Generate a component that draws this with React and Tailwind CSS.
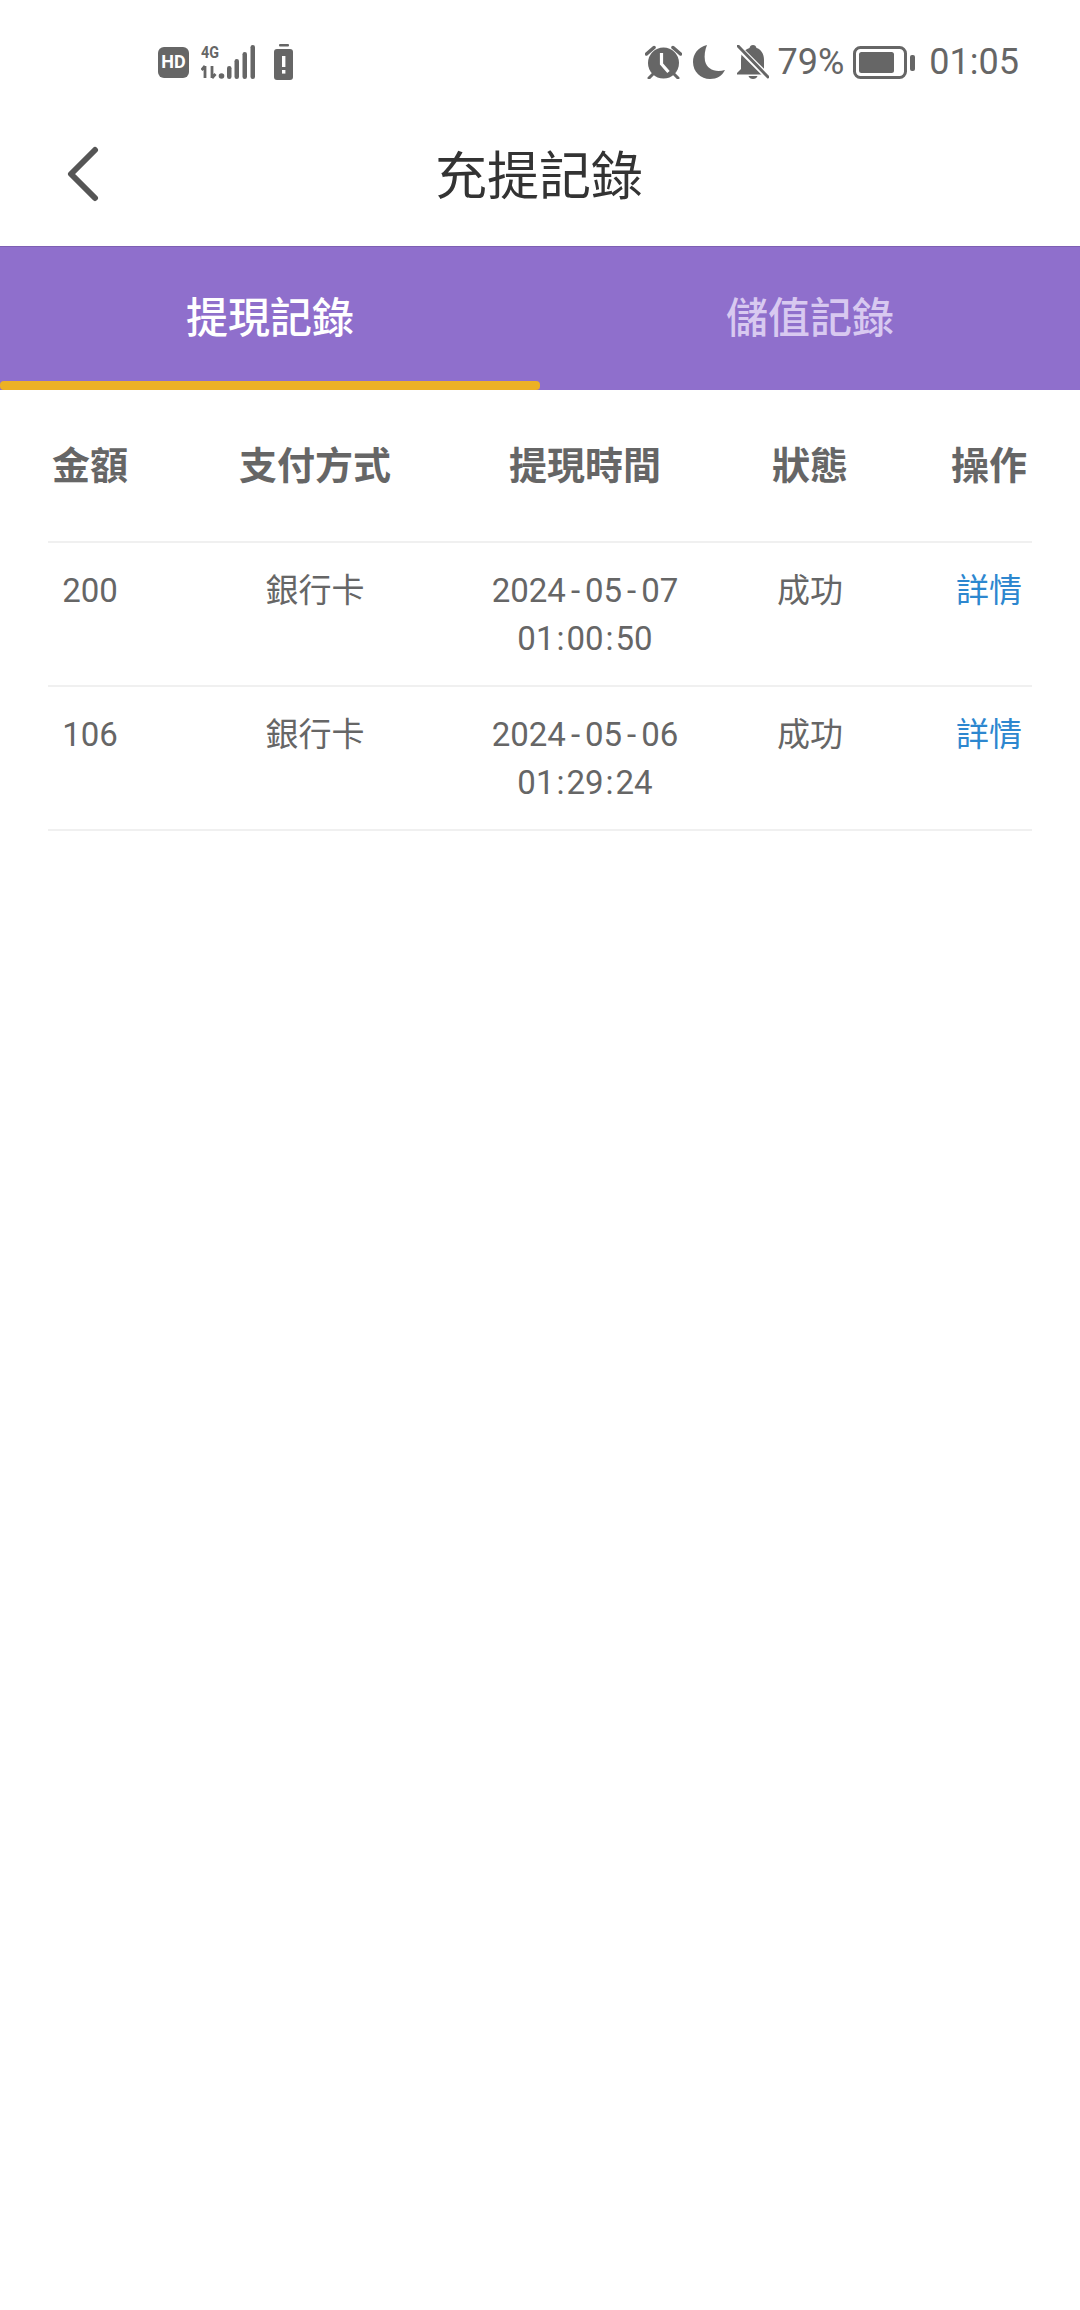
const records = [
  { amount: "200", method: "銀行卡", date: ["2024", "05", "07"], time: ["01", "00", "50"], status: "成功" },
  { amount: "106", method: "銀行卡", date: ["2024", "05", "06"], time: ["01", "29", "24"], status: "成功" },
]

const gridCols = "grid grid-cols-[132px_270px_270px_180px_132px] mx-[48px] border-b-2 border-[#f0f0f0]"

function SignalIcon() {
  return (
    <svg width="54" height="36" viewBox="0 0 54 36" className="block">
      <text x="0" y="14" fontSize="17" fontWeight="700" fill="#666" fontFamily="Roboto, sans-serif" textLength="18" lengthAdjust="spacingAndGlyphs">4G</text>
      <path d="M4 34V22M0.500 26l3.500-4M11 22v12M11 34l3.500-4" stroke="#666" strokeWidth="2.800" fill="none" />
      <circle cx="20.500" cy="32" r="2.800" fill="#666" />
      <rect x="26" y="22" width="4.500" height="13" rx="2.200" fill="#666" />
      <rect x="33.500" y="15" width="4.500" height="20" rx="2.200" fill="#666" />
      <rect x="41.500" y="8" width="4.500" height="27" rx="2.200" fill="#666" />
      <rect x="49.500" y="1" width="4.500" height="34" rx="2.200" fill="#666" />
    </svg>
  )
}

function AlertBatteryIcon() {
  return (
    <svg width="20" height="36" viewBox="0 0 20 36" className="block">
      <rect x="5" y="0" width="10" height="2.500" rx="1" fill="#666" />
      <rect x="0" y="5" width="19" height="31" rx="3" fill="#666" />
      <rect x="8" y="12" width="3.400" height="11" fill="#fff" />
      <rect x="8" y="26" width="3.400" height="3.600" fill="#fff" />
    </svg>
  )
}

function AlarmIcon() {
  return (
    <svg width="37" height="34" viewBox="0 0 37 34" className="block">
      <circle cx="18.500" cy="18" r="15.500" fill="#666" />
      <path d="M1.500 9 9 2.500M35.500 9 28 2.500" stroke="#666" strokeWidth="3.500" strokeLinecap="round" />
      <path d="M8 29l-4 4M29 29l4 4" stroke="#666" strokeWidth="3" strokeLinecap="round" />
      <path d="M16.500 8v11l7 8" stroke="#fff" strokeWidth="3.200" fill="none" />
    </svg>
  )
}

function MoonIcon() {
  return (
    <svg width="32" height="34" viewBox="0 0 32 34" className="block">
      <path d="M14 0C5 2 0 9 0 17c0 10 8 17 17 17 7 0 12-3 15-9-10 3-18-1-20-9-1-6 0-11 2-16Z" fill="#666" />
    </svg>
  )
}

function BellOffIcon() {
  return (
    <svg width="32" height="34" viewBox="0 0 32 34" className="block">
      <path d="M16 0c-2 0-3 1-3.500 3C9 4 7 6 5.500 8L27 29.500V15c0-6-3-11-7.500-12C19 1 18 0 16 0Z" fill="#666" />
      <path d="M4 14v10l-4 4v1.500h25L4.500 9Z" fill="#666" />
      <path d="M11.500 31h9c-.5 2-2.500 3-4.500 3s-4-1-4.500-3Z" fill="#666" />
      <path d="M2 3l29 29" stroke="#fff" strokeWidth="6" />
      <path d="M1 1l30 31" stroke="#666" strokeWidth="3" strokeLinecap="round" />
    </svg>
  )
}

function BatteryIcon() {
  return (
    <svg width="62" height="33" viewBox="0 0 62 33" className="block">
      <rect x="1.500" y="1.500" width="51" height="30" rx="6" fill="none" stroke="#666" strokeWidth="3" />
      <rect x="6" y="6" width="35" height="21" rx="2.500" fill="#666" />
      <rect x="57" y="9" width="5" height="16" rx="2" fill="#666" />
    </svg>
  )
}

function StatusBar() {
  return (
    <div className="flex h-[104px] items-center justify-between pt-[20px] pl-[158px] pr-[61px] text-[#666]">
      <div className="flex items-center">
        <div className="flex h-[31px] w-[31px] items-center justify-center rounded-[6px] bg-[#666] text-[18px] font-bold leading-none text-white">HD</div>
        <div className="ml-[12px]"><SignalIcon /></div>
        <div className="ml-[19px]"><AlertBatteryIcon /></div>
      </div>
      <div className="flex items-center">
        <AlarmIcon />
        <div className="ml-[11px]"><MoonIcon /></div>
        <div className="ml-[12px]"><BellOffIcon /></div>
        <span className="ml-[9px] text-[36px] leading-none">79%</span>
        <div className="ml-[9px]"><BatteryIcon /></div>
        <span className="ml-[14px] text-[36px] leading-none">01:05</span>
      </div>
    </div>
  )
}

// the picture's font sets wider separators than Roboto, so they get some margin
function Spaced({ parts, sep, sepClass }) {
  return parts.map((part, i) => (
    <span key={i}>
      {i > 0 && <span className={sepClass}>{sep}</span>}
      {part}
    </span>
  ))
}

export default function App() {
  return (
    <div className="min-h-[2310px] bg-white font-['Roboto','Noto_Sans_CJK_TC',sans-serif]">
      <StatusBar />

      {/* Header */}
      <div className="relative flex h-[142px] items-center justify-center">
        <svg width="36" height="56" viewBox="0 0 36 56" className="absolute left-[65px] top-[42px]">
          <path d="M30 4 6 28l24 24" fill="none" stroke="#555" strokeWidth="6" strokeLinecap="round" strokeLinejoin="round" />
        </svg>
        <h1 className="mr-[2px] pt-[6px] text-[52px] font-normal leading-none text-[#333]">充提記錄</h1>
      </div>

      {/* Tabs */}
      <div className="grid h-[144px] grid-cols-2 border-t border-[#7d5fb3] bg-[#8f6fcc]">
        <div className="relative flex items-center justify-center text-[42px] font-medium leading-none text-white">
          提現記錄
          <div className="absolute inset-x-0 bottom-0 h-[9px] rounded-[4px] bg-[#ecb125]" />
        </div>
        <div className="flex items-center justify-center text-[42px] font-medium leading-none text-[#d8c9f0]">儲值記錄</div>
      </div>

      {/* Table */}
      <div className={`${gridCols} h-[153px] items-center text-center text-[38px] font-bold leading-[48px] text-[#666]`}>
        <div className="pr-[48px]">金額</div>
        <div>支付方式</div>
        <div>提現時間</div>
        <div>狀態</div>
        <div className="pl-[46px] whitespace-nowrap">操作</div>
      </div>
      {records.map((record) => (
        <div key={record.amount} className={`${gridCols} h-[144px] pt-[24px] text-center text-[33px] leading-[48px] text-[#666]`}>
          <div className="pr-[48px]">{record.amount}</div>
          <div>{record.method}</div>
          <div>
            <Spaced parts={record.date} sep="-" sepClass="mx-[5px]" />
            <br />
            <Spaced parts={record.time} sep=":" sepClass="mx-[2px]" />
          </div>
          <div>{record.status}</div>
          <div className="pl-[46px] whitespace-nowrap text-[#2d87cf]">詳情</div>
        </div>
      ))}
    </div>
  )
}
